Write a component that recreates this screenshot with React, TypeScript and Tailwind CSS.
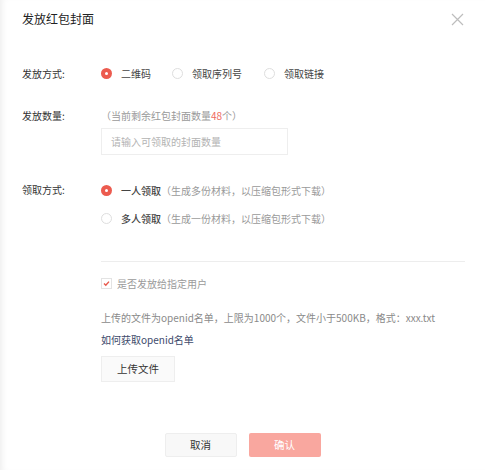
import React from "react";

const font = { fontFamily: '"Noto Sans CJK SC", "Noto Sans", sans-serif' };

function Radio({ checked, label, note }: { checked?: boolean; label: string; note?: string }) {
  return (
    <div className="flex h-[16px] items-center">
      {checked ? (
        <span className="flex h-[11px] w-[11px] items-center justify-center rounded-full bg-[#ec5b4f]">
          <span className="h-[3px] w-[3px] rounded-full bg-white" />
        </span>
      ) : (
        <span className="h-[11px] w-[11px] rounded-full border border-[#dedede] bg-white" />
      )}
      <span className={`ml-[9px] text-[10px] text-[#444] ${note ? "font-medium text-[#333]" : ""}`}>
        {label}
      </span>
      {note && <span className="text-[10px] text-[#9a9a9a]">{note}</span>}
    </div>
  );
}

export default function App() {
  return (
    <div
      className="relative h-[470px] w-[485px] overflow-hidden bg-white pl-[22px] pr-[20px] shadow-[inset_6px_0_6px_-4px_rgba(0,0,0,0.07)]"
      style={font}
    >
      <div className="flex h-[38px] items-center justify-between">
        <h1 className="text-[12px] text-[#222]">发放红包封面</h1>
        <svg width="13" height="13" viewBox="0 0 13 13" className="mr-[1px]">
          <path d="M1 1L12 12M12 1L1 12" stroke="#bdbdbd" strokeWidth="1.2" />
        </svg>
      </div>

      <div className="mt-[27px] flex h-[16px] items-center">
        <span className="w-[79px] text-[10px] text-[#333]">发放方式:</span>
        <div className="flex items-center">
          <Radio checked label="二维码" />
          <div className="ml-[21px]">
            <Radio label="领取序列号" />
          </div>
          <div className="ml-[22px]">
            <Radio label="领取链接" />
          </div>
        </div>
      </div>

      <div className="mt-[27px] flex">
        <span className="h-[16px] w-[79px] text-[10px] leading-[16px] text-[#333]">发放数量:</span>
        <div className="flex flex-col">
          <span className="h-[16px] text-[10px] leading-[16px] text-[#9a9a9a]">
            （当前剩余红包封面数量<span className="text-[#ef6a5e]">48</span>个）
          </span>
          <div className="mt-[4px] flex h-[27px] w-[187px] items-center border border-[#eeeeee] pl-[9px] text-[10px] text-[#b3b3b3]">
            请输入可领取的封面数量
          </div>
        </div>
      </div>

      <div className="mt-[27px] flex">
        <span className="h-[16px] w-[79px] text-[10px] leading-[16px] text-[#333]">领取方式:</span>
        <div className="flex flex-col gap-[12px]">
          <Radio checked label="一人领取" note="（生成多份材料，以压缩包形式下载）" />
          <Radio label="多人领取" note="（生成一份材料，以压缩包形式下载）" />
        </div>
      </div>

      <div className="ml-[79px] flex flex-col">
        <div className="mt-[35px] h-px bg-[#ededed]" />
        <div className="mt-[13px] flex h-[16px] items-center">
          <span className="flex h-[11px] w-[11px] items-center justify-center border border-[#e3e3e3] bg-white">
            <svg width="7" height="7" viewBox="0 0 7 7">
              <path d="M1 3.6L2.8 5.3L6 1.6" stroke="#e8574a" strokeWidth="1.4" fill="none" />
            </svg>
          </span>
          <span className="ml-[5px] text-[10px] text-[#9a9a9a]">是否发放给指定用户</span>
        </div>
        <p className="mt-[19px] h-[16px] text-[10px] leading-[16px] text-[#8a8a8a]">
          上传的文件为openid名单，上限为1000个，文件小于500KB，格式：xxx.txt
        </p>
        <p className="mt-[6px] h-[16px] text-[10px] leading-[16px] text-[#3d4a6b]">如何获取openid名单</p>
        <button
          type="button"
          className="mt-[8px] h-[26px] w-[74px] border border-[#eeeeee] bg-[#fafafa] text-[10.5px] text-[#333]"
        >
          上传文件
        </button>
      </div>

      <div className="mt-[51px] flex justify-center gap-[12px] pr-[2px]">
        <button
          type="button"
          className="h-[24px] w-[72px] rounded-[2px] border border-[#eeeeee] bg-[#f8f8f8] text-[10.5px] text-[#333]"
        >
          取消
        </button>
        <button type="button" className="h-[24px] w-[72px] rounded-[2px] bg-[#f9a79f] text-[10.5px] text-white">
          确认
        </button>
      </div>
    </div>
  );
}
